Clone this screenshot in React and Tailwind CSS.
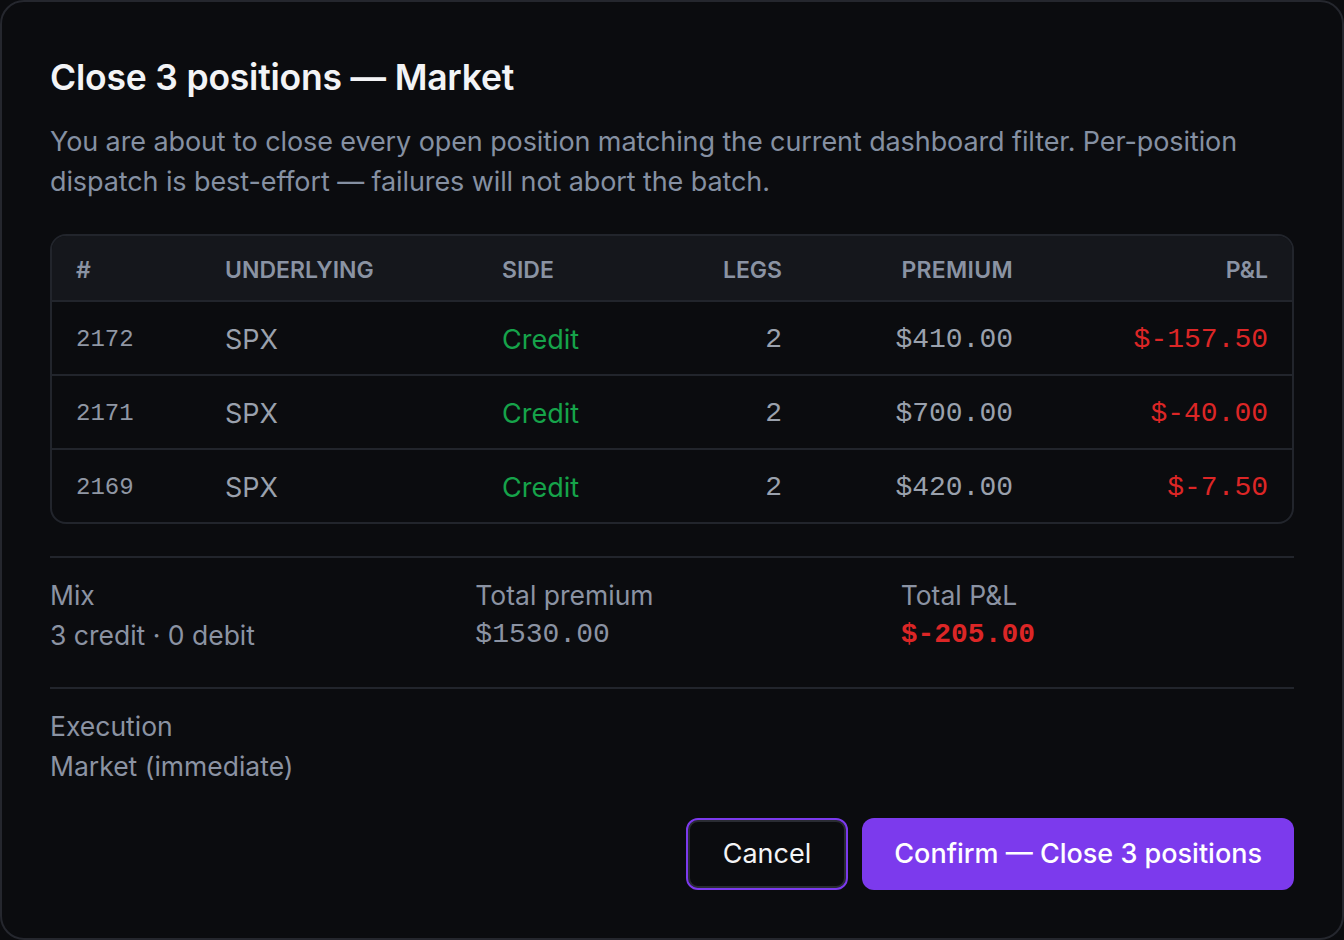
const rows = [
  { id: 2172, sym: 'SPX', side: 'Credit', legs: 2, premium: '$410.00', pnl: '$-157.50' },
  { id: 2171, sym: 'SPX', side: 'Credit', legs: 2, premium: '$700.00', pnl: '$-40.00' },
  { id: 2169, sym: 'SPX', side: 'Credit', legs: 2, premium: '$420.00', pnl: '$-7.50' },
]

const cols = 'grid grid-cols-[149px_277px_180px_148px_231px_1fr]'
const mono = "font-['Liberation_Mono',monospace]"

function Stat({ label, children }) {
  return (
    <div className="flex flex-col text-[26.5px] leading-10 text-[#8b93a3]">
      <span>{label}</span>
      {children}
    </div>
  )
}

export default function App() {
  return (
    <div className="h-[940px] w-[1344px] bg-[#0b0c0f] font-['Inter',sans-serif]">
      <div className="flex h-full flex-col rounded-[24px] border-2 border-[#25272e] bg-[#0b0c0f] p-12">
        <h2 className="text-[35.5px] font-semibold leading-[56px] tracking-[-0.2px] text-[#f3f4f6]">
          Close 3 positions — Market
        </h2>
        <p className="mt-4 text-[27px] leading-10 tracking-[-0.1px] text-[#8590a2]">
          You are about to close every open position matching the current dashboard filter. Per-position
          dispatch is best-effort — failures will not abort the batch.
        </p>

        <div className="mt-8 overflow-hidden rounded-2xl border-2 border-[#22252c]">
          <div className={`${cols} border-b-2 border-[#22252c] bg-[#15171c] text-[23px] font-semibold uppercase leading-8 text-[#8a93a3]`}>
            <div className="px-6 pt-[18px] pb-[14px]">#</div>
            <div className="px-6 pt-[18px] pb-[14px]">Underlying</div>
            <div className="px-6 pt-[18px] pb-[14px]">Side</div>
            <div className="px-6 pt-[18px] pb-[14px] text-right">Legs</div>
            <div className="px-6 pt-[18px] pb-[14px] text-right tracking-[0.3px]">Premium</div>
            <div className="px-6 pt-[18px] pb-[14px] text-right">P&amp;L</div>
          </div>
          {rows.map((r, i) => (
            <div
              key={r.id}
              className={`${cols} items-center leading-10 ${i < rows.length - 1 ? 'border-b-2 border-[#22252c]' : ''}`}
            >
              <div className={`px-6 pt-[18px] pb-[14px] text-[24px] text-[#9097a4] ${mono}`}>{r.id}</div>
              <div className="px-6 pt-[18px] pb-[14px] text-[27px] text-[#9aa1ad]">{r.sym}</div>
              <div className="px-6 pt-[18px] pb-[14px] text-[27px] text-[#16a34a]">{r.side}</div>
              <div className={`px-6 pt-[18px] pb-[14px] text-right text-[28px] text-[#9aa1ad] ${mono}`}>{r.legs}</div>
              <div className={`px-6 pt-[18px] pb-[14px] text-right text-[28px] text-[#9aa1ad] ${mono}`}>{r.premium}</div>
              <div className={`px-6 pt-[18px] pb-[14px] text-right text-[28px] text-[#dc2626] ${mono}`}>{r.pnl}</div>
            </div>
          ))}
        </div>

        <div className="mt-8 grid grid-cols-3 gap-8 border-t-2 border-[#22252c] pt-[17px]">
          <Stat label="Mix">
            <span>3 credit · 0 debit</span>
          </Stat>
          <Stat label="Total premium">
            <span className={`${mono} text-[28px]`}>$1530.00</span>
          </Stat>
          <Stat label="Total P&L">
            <span className={`${mono} text-[28px] font-bold text-[#dc2626]`}>$-205.00</span>
          </Stat>
        </div>

        <div className="mt-8 border-t-2 border-[#22252c] pt-[17px]">
          <Stat label="Execution">
            <span>Market (immediate)</span>
          </Stat>
        </div>

        <div className="mt-8 flex justify-end gap-[14px]">
          <button className="h-[72px] rounded-xl border-2 border-[#7c3aed] bg-[#0b0c0f] px-[35px] text-[27px] text-[#f3f4f6] shadow-[inset_0_0_0_2px_#2a2c33]">
            Cancel
          </button>
          <button className="h-[72px] rounded-xl bg-[#7c3aed] px-8 text-[27px] font-medium text-white">
            Confirm — Close 3 positions
          </button>
        </div>
      </div>
    </div>
  )
}
